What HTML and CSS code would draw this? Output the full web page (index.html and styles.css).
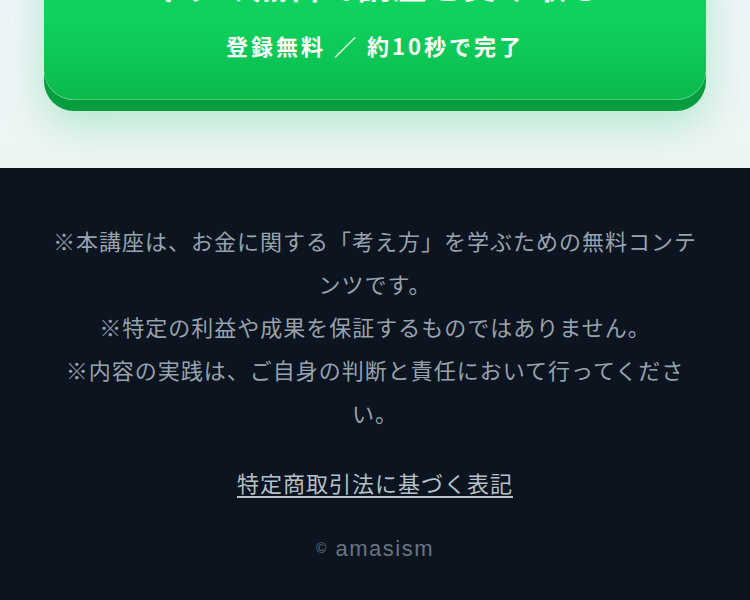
FILE: index.html
```html
<!DOCTYPE html>
<html lang="ja">
<head>
<meta charset="utf-8">
<title>amasism</title>
<link rel="stylesheet" href="styles.css">
</head>
<body>
<section class="hero">
  <a class="cta" href="#">
    <span class="cta-title">今すぐ無料で講座を受け取る</span>
    <span class="cta-sub">登録無料 ／ 約10秒で完了</span>
  </a>
</section>
<footer class="footer">
  <p class="note">※本講座は、お金に関する「考え方」を学ぶための無料コンテンツです。</p>
  <p class="note">※特定の利益や成果を保証するものではありません。</p>
  <p class="note">※内容の実践は、ご自身の判断と責任において行ってください。</p>
  <a class="legal" href="#">特定商取引法に基づく表記</a>
  <p class="copy"><span class="copy-mark">©</span> amasism</p>
</footer>
</body>
</html>
```
FILE: styles.css
```css
html, body {
  margin: 0;
  padding: 0;
}
body {
  font-family: "Noto Sans CJK JP", "Noto Sans", sans-serif;
  background: #0b141f;
}
.hero {
  display: flow-root;
  background: linear-gradient(180deg, #eef4f9 0%, #edf5f4 100%);
  padding: 0 44px 68px;
}
.cta {
  display: flex;
  flex-direction: column;
  align-items: center;
  margin-top: -63px;
  padding: 24px 0 38px;
  border-radius: 30px;
  text-decoration: none;
  color: #fff;
  background: linear-gradient(180deg, #10d862 0%, #0fd05c 55%, #0bb94b 100%);
  box-shadow:
    inset 0 -1px 0 rgba(255, 255, 255, 0.25),
    0 11px 0 #069d3e,
    0 24px 40px rgba(20, 200, 100, 0.28);
}
.cta-title {
  font-size: 34px;
  font-weight: 700;
  line-height: 1.4;
  letter-spacing: 1px;
}
.cta-sub {
  margin-top: 20px;
  font-size: 22px;
  font-weight: 700;
  line-height: 33px;
  letter-spacing: 3px;
}
.footer {
  display: flex;
  flex-direction: column;
  align-items: center;
  padding: 51px 50px 40px;
  background: #0b141f;
  text-align: center;
}
.note {
  margin: 0;
  font-size: 22px;
  line-height: 43px;
  letter-spacing: 1px;
  color: #98a2ad;
}
.legal {
  margin-top: 27px;
  font-size: 22px;
  line-height: 43px;
  letter-spacing: 1px;
  color: #b6c0ca;
  text-decoration: underline;
  text-underline-offset: 4px;
}
.copy {
  margin: 23px 0 0;
  font-family: "Liberation Sans", Arial, sans-serif;
  font-size: 22px;
  line-height: 43px;
  letter-spacing: 1.5px;
  color: #6b7480;
}
.copy-mark {
  font-size: 14px;
  vertical-align: 3px;
}
```
